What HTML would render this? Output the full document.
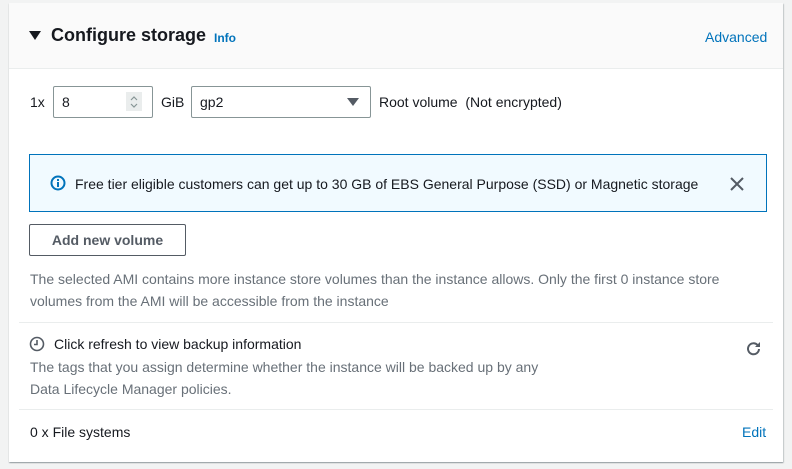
<!DOCTYPE html>
<html><head><meta charset="utf-8"><style>
*{box-sizing:border-box;margin:0;padding:0}
body{width:792px;height:469px;background:#f2f3f3;font-family:"Liberation Sans",sans-serif;font-size:14px;color:#16191f;position:relative;overflow:hidden}
.card{position:absolute;left:9px;top:3px;width:774px;height:459px;background:#fff;box-shadow:0 1px 1px rgba(0,28,36,.3),1px 1px 1px rgba(0,28,36,.15);}
.hdr{position:absolute;left:0;top:0;width:774px;height:66px;background:#fafafa;border-bottom:1px solid #eaeded}
.a{position:absolute;white-space:nowrap}
.link{color:#0073bb}
.gray{color:#687078}
.hr{position:absolute;left:10px;width:754px;height:1px;background:#eaeded}
</style></head><body>
<div class="card">
 <div class="hdr">
  <svg class="a" style="left:20px;top:28px" width="12" height="10"><path d="M0 0H12L6 9Z" fill="#16191f"/></svg>
  <div class="a" style="left:42px;top:22px;font-size:18px;font-weight:bold">Configure storage</div>
  <div class="a link" style="left:205px;top:28px;font-size:12px;font-weight:bold">Info</div>
  <div class="a link" style="left:696px;top:26px">Advanced</div>
 </div>
 <div class="a" style="left:21px;top:91px">1x</div>
 <div class="a" style="left:44px;top:83px;width:100px;height:32px;border:1px solid #879596;border-radius:2px"></div>
 <div class="a" style="left:53px;top:91px">8</div>
 <div class="a" style="left:117px;top:89px;width:16px;height:19px;background:#eaeded"></div>
 <svg class="a" style="left:119px;top:90px" width="12" height="18"><path d="M3 7L6 4L9 7M3 11L6 14L9 11" stroke="#879596" fill="none" stroke-width="1.2"/></svg>
 <div class="a" style="left:152px;top:91px">GiB</div>
 <div class="a" style="left:182px;top:83px;width:180px;height:32px;border:1px solid #879596;border-radius:2px"></div>
 <div class="a" style="left:191px;top:91px">gp2</div>
 <svg class="a" style="left:338px;top:95px" width="12" height="9"><path d="M0 0H12L6 8Z" fill="#545b64"/></svg>
 <div class="a" style="left:370px;top:91px">Root volume &nbsp;(Not encrypted)</div>
 <div class="a" style="left:20px;top:151px;width:738px;height:58px;background:#f1faff;border:1px solid #0073bb"></div>
 <svg class="a" style="left:41px;top:172px" width="16" height="16"><circle cx="8" cy="8" r="6.5" fill="none" stroke="#0073bb" stroke-width="2"/><rect x="7" y="7" width="2" height="5" fill="#0073bb"/><rect x="7" y="4" width="2" height="2" fill="#0073bb"/></svg>
 <div class="a" style="left:66px;top:173px">Free tier eligible customers can get up to 30 GB of EBS General Purpose (SSD) or Magnetic storage</div>
 <svg class="a" style="left:721px;top:174px" width="14" height="14"><path d="M1 1L13 13M13 1L1 13" stroke="#545b64" stroke-width="2"/></svg>
 <div class="a" style="left:20px;top:221px;width:157px;height:32px;border:1px solid #545b64;border-radius:2px;text-align:center;line-height:30px;font-weight:bold;color:#545b64">Add new volume</div>
 <div class="a gray" style="left:21px;top:265px;line-height:22px">The selected AMI contains more instance store volumes than the instance allows. Only the first 0 instance store<br>volumes from the AMI will be accessible from the instance</div>
 <div class="hr" style="top:319px"></div>
 <svg class="a" style="left:20px;top:333px" width="16" height="16"><circle cx="8" cy="8" r="6.5" fill="none" stroke="#545b64" stroke-width="1.6"/><path d="M8 4V8.5H5" stroke="#545b64" stroke-width="1.6" fill="none"/></svg>
 <div class="a" style="left:45px;top:333px">Click refresh to view backup information</div>
 <div class="a gray" style="left:21px;top:353px;line-height:22px">The tags that you assign determine whether the instance will be backed up by any<br>Data Lifecycle Manager policies.</div>
 <svg class="a" style="left:736px;top:337px" width="18" height="18"><path d="M14 9A5.5 5.5 0 1 1 12.5 5" stroke="#545b64" stroke-width="2" fill="none"/><path d="M15 2V7H10Z" fill="#545b64"/></svg>
 <div class="hr" style="top:406px"></div>
 <div class="a" style="left:21px;top:421px">0 x File systems</div>
 <div class="a link" style="left:733px;top:421px">Edit</div>
</div>
</body></html>
